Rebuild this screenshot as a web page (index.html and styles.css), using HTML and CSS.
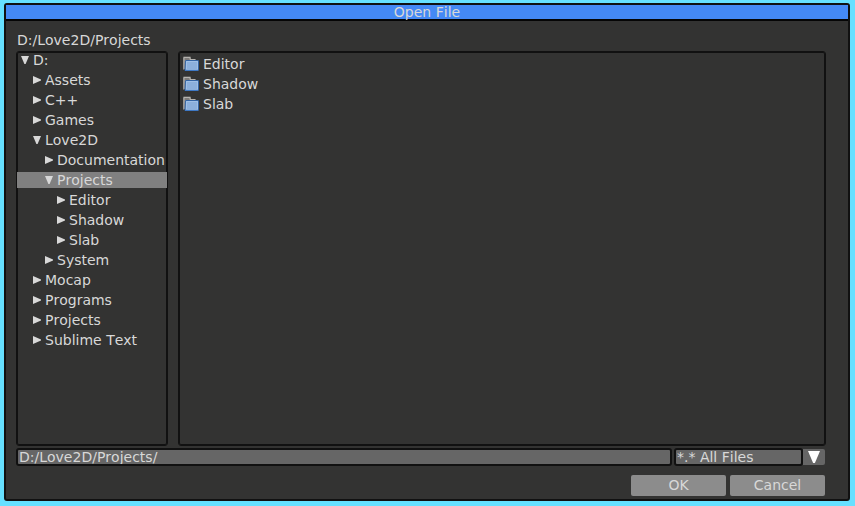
FILE: index.html
```html
<!DOCTYPE html>
<html lang="en">
<head>
  <meta charset="UTF-8">
  <title>Open File</title>
  <link rel="stylesheet" href="styles.css">
</head>
<body>
<svg class="defs">
  <symbol id="right" viewBox="0 0 8 8"><path d="M0 0v8l8-3.600v-.8z"/></symbol>
  <symbol id="down" viewBox="0 0 8 8"><path d="M0 0h8l-3.400 8h-1.200z"/></symbol>
  <symbol id="folder" viewBox="0 0 16 16">
    <path d="M0 14V1.500q0-1 1-1h6q1 0 1 1V3h5v10H2z" fill="#7d7b79"/>
    <path d="M1 13V1.500h6V3.500H12" fill="none" stroke="#b4b2ae"/>
    <path d="M2.500 5q0-.5.5-.5h12q.5 0 .5.500v9q0 .5-.5.500H2z" fill="#8cb0dc" stroke="#3465a4"/>
    <path d="M3.500 13V5.500h11V13" fill="none" stroke="#a0c0e6"/>
    <path d="M2 14.500h13" stroke="#3e78c4"/>
  </symbol>
</svg>
<form class="dialog">
  <h1 class="title">Open File</h1>
  <div class="content">
    <p class="path">D:/Love2D/Projects</p>
    <div class="panels">
      <div class="panel tree">
        <button type="button" class="node"><svg><use href="#down"/></svg>D:</button>
        <button type="button" class="node lv1"><svg><use href="#right"/></svg>Assets</button>
        <button type="button" class="node lv1"><svg><use href="#right"/></svg>C++</button>
        <button type="button" class="node lv1"><svg><use href="#right"/></svg>Games</button>
        <button type="button" class="node lv1"><svg><use href="#down"/></svg>Love2D</button>
        <button type="button" class="node lv2"><svg><use href="#right"/></svg>Documentation</button>
        <button type="button" class="node lv2 selected"><svg><use href="#down"/></svg>Projects</button>
        <button type="button" class="node lv3"><svg><use href="#right"/></svg>Editor</button>
        <button type="button" class="node lv3"><svg><use href="#right"/></svg>Shadow</button>
        <button type="button" class="node lv3"><svg><use href="#right"/></svg>Slab</button>
        <button type="button" class="node lv2"><svg><use href="#right"/></svg>System</button>
        <button type="button" class="node lv1"><svg><use href="#right"/></svg>Mocap</button>
        <button type="button" class="node lv1"><svg><use href="#right"/></svg>Programs</button>
        <button type="button" class="node lv1"><svg><use href="#right"/></svg>Projects</button>
        <button type="button" class="node lv1"><svg><use href="#right"/></svg>Sublime Text</button>
      </div>
      <div class="panel files">
        <button type="button" class="file"><svg><use href="#folder"/></svg>Editor</button>
        <button type="button" class="file"><svg><use href="#folder"/></svg>Shadow</button>
        <button type="button" class="file"><svg><use href="#folder"/></svg>Slab</button>
      </div>
    </div>
    <div class="fields">
      <input class="field name" type="text" value="D:/Love2D/Projects/" aria-label="File name">
      <div class="filter">
        <select class="field" aria-label="File type">
          <option>*.* All Files</option>
        </select>
        <button type="button" class="drop" aria-label="Show file types"><svg><use href="#down"/></svg></button>
      </div>
    </div>
    <div class="actions">
      <button type="submit" class="btn">OK</button>
      <button type="button" class="btn">Cancel</button>
    </div>
  </div>
</form>
</body>
</html>
```

FILE: styles.css
```css
* {
  margin: 0;
  padding: 0;
  box-sizing: border-box;
}
body {
  display: flex;
  min-height: 100vh;
  padding: 3px 5px 5px 4px;
  background-color: #66e0ff;
}
body, button, input, select {
  font: 14px/16px "DejaVu Sans", sans-serif;
  font-kerning: none;
  color: #d8d8d8;
}
button {
  border: none;
  background: none;
}
svg {
  flex: none;
  fill: currentColor;
}
.defs {
  display: none;
}

/* window */
.dialog {
  flex: 1;
  display: flex;
  flex-direction: column;
  min-width: 0;
  border: 2px solid #111;
  border-radius: 3px;
  background-color: #333332;
}
.title {
  height: 16px;
  border-bottom: 2px solid #050505;
  background-color: #4489f5;
  font-size: 14px;
  font-weight: normal;
  line-height: 14px;
  text-align: center;
}
.content {
  flex: 1;
  display: flex;
  flex-direction: column;
  padding: 11px 22px 3px 10px;
}
.path {
  padding: 0 1px;
  margin-bottom: 3px;
}

/* folder tree and file list */
.panels {
  flex: 1;
  display: flex;
  gap: 10px;
}
.panel {
  display: flex;
  flex-direction: column;
  gap: 4px;
  border: 1px solid #111;
  border-radius: 3px;
  box-shadow: inset 0 0 0 1px #111;
  overflow: hidden;
}
.tree {
  flex: none;
  width: 152px;
}
.files {
  flex: 1;
  padding: 4px;
}
.node, .file {
  display: flex;
  align-items: center;
  gap: 4px;
  height: 16px;
  white-space: nowrap;
}
.node {
  padding-left: 4px;
}
.node svg {
  width: 8px;
  height: 8px;
}
.lv1 {
  padding-left: 16px;
}
.lv2 {
  padding-left: 28px;
}
.lv3 {
  padding-left: 40px;
}
.selected {
  background-color: #808080;
}
.file svg {
  width: 16px;
  height: 16px;
}

/* bottom fields */
.fields {
  display: flex;
  gap: 2px;
  margin-top: 2px;
}
.field {
  height: 18px;
  border: 2px solid #111;
  border-radius: 3px;
  background-color: #666;
  line-height: 14px;
  appearance: none;
}
.name {
  flex: 1;
  min-width: 0;
  padding-left: 1px;
}
.filter {
  display: flex;
  align-items: center;
  width: 152px;
  padding-right: 1px;
}
.filter .field {
  flex: 1;
  padding-left: 1px;
}
.drop {
  display: flex;
  align-items: center;
  justify-content: center;
  width: 22px;
  height: 16px;
  border-radius: 0 2px 2px 0;
  background-color: #666;
  color: #fff;
}
.drop svg {
  width: 12px;
  height: 12px;
}
.actions {
  display: flex;
  justify-content: flex-end;
  gap: 4px;
  padding-right: 1px;
  margin-top: 9px;
}
.btn {
  width: 95px;
  height: 21px;
  padding-bottom: 1px;
  border-radius: 2px;
  background-color: #8c8c8c;
}
```
